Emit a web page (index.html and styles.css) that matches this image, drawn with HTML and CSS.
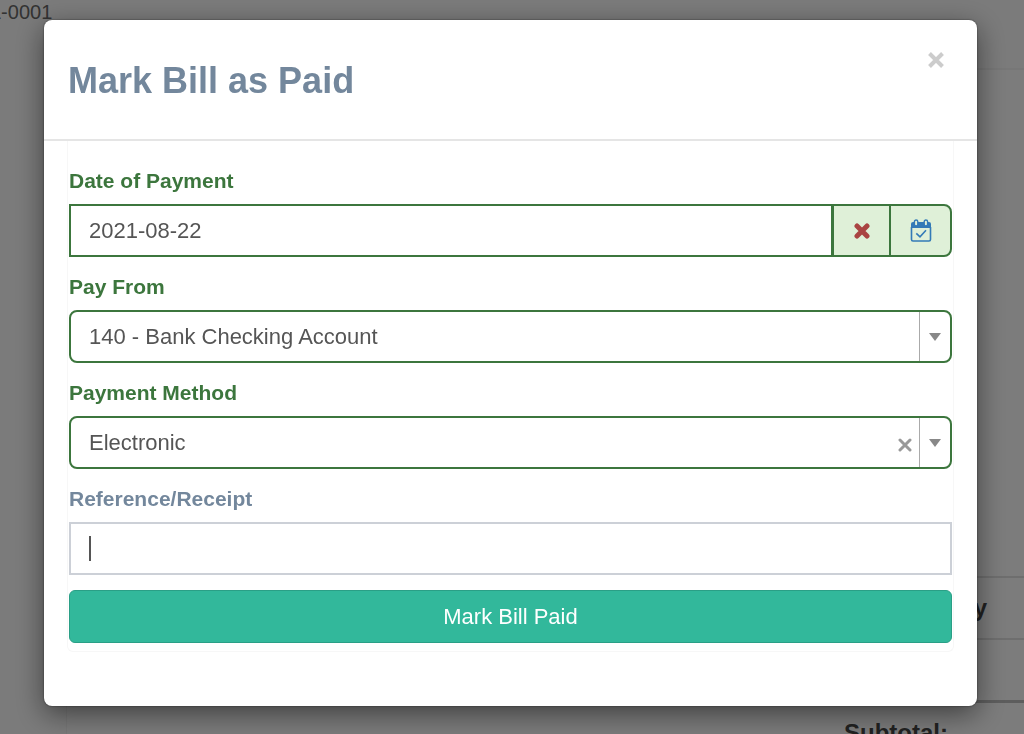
FILE: index.html
```html
<!DOCTYPE html>
<html lang="en">
<head>
  <meta charset="UTF-8" />
  <meta name="viewport" content="width=device-width, initial-scale=1" />
  <title>Mark Bill as Paid</title>
  <link rel="stylesheet" href="styles.css">
</head>
<body>

  <!-- Bill page behind the modal -->
  <div class="page">
    <div class="page-heading">L-0001</div>
    <div class="page-content">
      <div class="bill-details"></div>
      <table class="bill-items">
        <thead>
          <tr><th>y</th></tr>
        </thead>
        <tbody>
          <tr><td></td></tr>
        </tbody>
        <tfoot>
          <tr><th>Subtotal:</th></tr>
        </tfoot>
      </table>
    </div>
  </div>

  <div class="backdrop">
    <div class="modal" role="dialog" aria-labelledby="modalTitle">
      <div class="modal-header">
        <h1 id="modalTitle">Mark Bill as Paid</h1>
        <button type="button" class="close" aria-label="Close">
          <svg width="18" height="18" viewBox="0 0 18 18"><path d="M2.5 2.5L15.5 15.5M15.5 2.5L2.5 15.5" /></svg>
        </button>
      </div>

      <form class="modal-body">
        <div class="form-group success">
          <label for="date">Date of Payment</label>
          <div class="input-group">
            <input type="text" id="date" name="date" value="2021-08-22" />
            <button type="button" class="addon addon-remove" aria-label="Clear date">
              <svg width="16" height="16" viewBox="0 0 16 16"><path d="M3 3L13 13M13 3L3 13" /></svg>
            </button>
            <button type="button" class="addon addon-calendar" aria-label="Pick date">
              <svg width="22" height="24" viewBox="0 0 22 24">
                <path class="fill" d="M1 5a2 2 0 0 1 2-2h16a2 2 0 0 1 2 2v4H1z" />
                <path class="line" d="M1.5 8v12.5a1.5 1.5 0 0 0 1.5 1.5h16a1.5 1.5 0 0 0 1.5-1.5V8" />
                <rect class="ring" x="4.4" y="1" width="3.4" height="6" rx="1.7" />
                <rect class="ring" x="14.2" y="1" width="3.4" height="6" rx="1.7" />
                <path class="line" d="M6.3 14.3L10 17.8L16 11.3" />
              </svg>
            </button>
          </div>
        </div>

        <div class="form-group success">
          <label for="payFrom">Pay From</label>
          <div class="select-box">
            <select id="payFrom" name="payFrom">
              <option>140 - Bank Checking Account</option>
            </select>
            <span class="arrow"></span>
          </div>
        </div>

        <div class="form-group success">
          <label for="method">Payment Method</label>
          <div class="select-box">
            <select id="method" name="method">
              <option>Electronic</option>
            </select>
            <button type="button" class="clear" aria-label="Clear method">
              <svg width="14" height="14" viewBox="0 0 14 14"><path d="M2 2L12 12M12 2L2 12" /></svg>
            </button>
            <span class="arrow"></span>
          </div>
        </div>

        <div class="form-group">
          <label for="reference">Reference/Receipt</label>
          <div class="reference-box">
            <input type="text" id="reference" name="reference" />
          </div>
        </div>

        <button type="submit" class="btn-submit">Mark Bill Paid</button>
      </form>
    </div>
  </div>

</body>
</html>
```

FILE: styles.css
```css
* {
  box-sizing: border-box;
}
body {
  margin: 0;
  height: 100vh;
  overflow: hidden;
  font-family: "Liberation Sans", Arial, sans-serif;
  font-size: 22px;
  background: #f7f7f7;
  color: #555;
}

/* Page behind */
.page-heading {
  height: 68px;
  margin-left: -10px;
  font-size: 20px;
  line-height: 24px;
  color: #666;
}
.page-content {
  margin-left: 66px;
  background: #f9f9f9;
  border: 2px solid #eee;
  border-width: 2px 0 0 1px;
}
.bill-details {
  height: 506px;
}
.bill-items {
  width: 100%;
  border-collapse: collapse;
  font-size: 24px;
  color: #444;
}
.bill-items th,
.bill-items td {
  height: 62px;
  padding: 0 37px;
  text-align: right;
  border-top: 2px solid #ddd;
}
.bill-items tfoot th {
  padding: 0 76px;
  border-top: 3px solid #bbb;
}

/* Modal */
.backdrop {
  position: fixed;
  inset: 0;
  padding: 20px 47px 0 44px;
  overflow: hidden;
  background: rgba(0, 0, 0, 0.5);
}
.modal {
  background: #fff;
  border-radius: 8px;
  box-shadow: 0 0 2px rgba(0, 0, 0, 0.6), 0 8px 28px rgba(0, 0, 0, 0.5);
}
.modal-header {
  display: flex;
  justify-content: space-between;
  align-items: flex-start;
  padding: 31px 32px 28px 24px;
  border-bottom: 2px solid #e5e5e5;
}
.modal-header h1 {
  margin: 0;
  font-size: 36px;
  line-height: 60px;
  color: #73879c;
}
button {
  font: inherit;
  cursor: pointer;
}
button svg {
  display: block;
}
.close,
.clear {
  padding: 0;
  background: none;
  border: none;
}
.close path {
  stroke: #ccc;
  stroke-width: 4;
}
.modal-body {
  margin: 0 23px;
  padding: 25px 1px 8px;
  border: 1px solid #f7f7f7;
  border-top: none;
  border-radius: 0 0 6px 6px;
}
.modal::after {
  content: "";
  display: block;
  height: 54px;
}

/* Form */
.form-group {
  margin-bottom: 15px;
}
.form-group label {
  display: block;
  margin-bottom: 8px;
  font-size: 21px;
  font-weight: bold;
  line-height: 30px;
  color: #73879c;
}
.success label {
  color: #3c763d;
}
input,
select {
  flex: 1;
  width: 100%;
  min-width: 0;
  height: 53px;
  padding: 0 18px;
  font: inherit;
  color: #555;
  background: #fff;
  border: 2px solid #ccd0d7;
  border-radius: 0;
  outline: none;
}
.success input {
  border-color: #3c763d;
}
.input-group {
  display: flex;
}
.addon {
  display: flex;
  justify-content: center;
  align-items: center;
  padding: 0;
  background: #dff0d8;
  border: 2px solid #3c763d;
  border-left-width: 1px;
}
.addon-remove {
  width: 57px;
  border-right-width: 1px;
}
.addon-remove path {
  stroke: #a94442;
  stroke-width: 5;
  stroke-linecap: round;
}
.addon-calendar {
  width: 62px;
  border-radius: 0 8px 8px 0;
}
.addon-calendar .fill {
  fill: #337ab7;
}
.addon-calendar .line {
  fill: none;
  stroke: #337ab7;
  stroke-width: 1.6;
}
.addon-calendar .ring {
  fill: #dff0d8;
  stroke: #337ab7;
  stroke-width: 1.4;
}
.select-box {
  display: flex;
  align-items: center;
  height: 53px;
  border: 2px solid #3c763d;
  border-radius: 8px;
}
.select-box select {
  height: 100%;
  appearance: none;
  background: none;
  border: none;
}
.clear {
  margin: 4px 7px 0 0;
}
.clear path {
  stroke: #999;
  stroke-width: 3;
  stroke-linecap: round;
}
.arrow {
  display: flex;
  justify-content: center;
  align-items: center;
  align-self: stretch;
  width: 31px;
  border-left: 1px solid #aaa;
}
.arrow::after {
  content: "";
  border: 6px solid transparent;
  border-top: 8px solid #888;
  border-bottom: none;
}
.reference-box {
  position: relative;
}
.reference-box input {
  display: block;
  caret-color: transparent;
}
/* text cursor */
.reference-box::after {
  content: "";
  position: absolute;
  left: 20px;
  top: 14px;
  width: 2px;
  height: 25px;
  background: #555;
}
.btn-submit {
  display: block;
  width: 100%;
  height: 53px;
  color: #fff;
  background: #32b89b;
  border: 1px solid #2a9f86;
  border-radius: 6px;
}
```
